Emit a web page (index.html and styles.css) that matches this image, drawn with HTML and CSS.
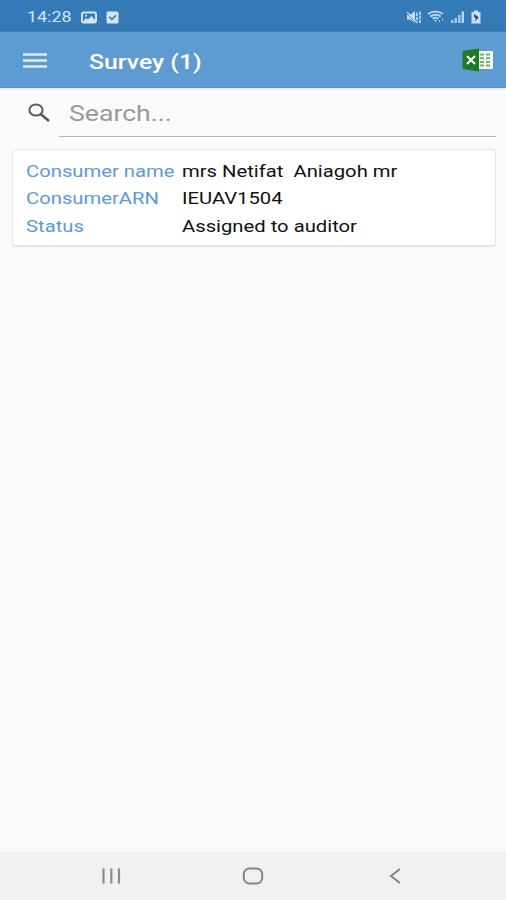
FILE: index.html
```html
<!DOCTYPE html>
<html lang="en">
<head>
<meta charset="UTF-8" />
<meta name="viewport" content="width=device-width, initial-scale=1" />
<title>Survey</title>
<link rel="stylesheet" href="styles.css">
</head>
<body>
  <div class="status-bar">
    <span class="time"><span class="wide">14:28</span></span>
    <svg class="picture-icon" width="16" height="13" viewBox="0 0 16 13">
      <rect x="1" y="1.500" width="14" height="10" rx="1.500" fill="none" stroke="#d3e5f5" stroke-width="1.900" />
      <path d="M2 10.500L5 7l2 1.500L10.500 5 14 9v2H2z" fill="#d3e5f5" />
      <circle cx="5" cy="4.700" r="1" fill="#d3e5f5" />
    </svg>
    <svg class="check-icon" width="13" height="13" viewBox="0 0 13 13">
      <rect x="0.500" y="0.500" width="12" height="12" rx="1.500" fill="#d3e5f5" />
      <path d="M3.300 5.800l2.500 2.500 4.200-4" fill="none" stroke="#347ab7" stroke-width="1.600" />
    </svg>
    <div class="signals">
      <svg width="16" height="14" viewBox="0 0 16 14">
        <path d="M1 4.500h3.500L9 1v12L4.500 9.500H1z" fill="#c3dbef" />
        <path d="M1 3.500l9 9.500" stroke="#347ab7" stroke-width="1" />
        <path d="M1 2l10.500 11" stroke="#c3dbef" stroke-width="1.200" />
        <path d="M11 2.500v8.500M14 1.500v11.500" stroke="#c3dbef" stroke-width="1.600" stroke-dasharray="3.500 0.800" />
      </svg>
      <svg width="18" height="14" viewBox="0 0 18 14">
        <path d="M1 4q7.500-5 15 0M3.300 6.500q5.200-3.500 10.400 0M5.600 8.800q2.900-2 5.800 0" fill="none" stroke="#b5d2eb" stroke-width="1.900" />
        <path d="M7 10h3l-1.500 2zM12 10h1v2h-1zM15 8.500h1v2h-1z" fill="#b5d2eb" />
      </svg>
      <svg width="15" height="14" viewBox="0 0 15 14">
        <path d="M1 10h2.500v3H1zM4.500 8H7v5H4.500zM8 5h2.500v8H8z" fill="#a3c6e4" />
        <path d="M11.500 1.500H14v11.500h-2.500z" fill="#b9d5ec" />
      </svg>
      <svg width="12" height="14" viewBox="0 0 12 14">
        <path d="M4 0.500h4V2h2.500v11.500h-9V2H4z" fill="#c9dff1" />
        <path d="M4.200 4l4.500 3.200-3.500 4 .3-3.500-1.500-.5z" fill="#244d73" />
      </svg>
    </div>
  </div>

  <header class="app-bar">
    <svg class="menu-icon" width="24" height="17" viewBox="0 0 24 17">
      <path d="M0 2.500h24M0 8.500h24M0 14.500h24" stroke="#d9e9f6" stroke-width="2.400" />
    </svg>
    <h1><span class="wide">Survey (1)</span></h1>
    <svg class="excel-icon" width="32" height="24" viewBox="0 0 32 24">
      <rect x="14" y="3" width="17" height="18" rx="1" fill="#f3f8f3" />
      <path d="M18 6.500h4M24 6.500h4M18 10.200h4M24 10.200h4M18 13.900h4M24 13.900h4M18 17.600h4M24 17.600h4" stroke="#79ad7b" stroke-width="2" />
      <path d="M0.500 3L17 0.500v23L0.500 21z" fill="#1d7a25" />
      <path d="M5 8l8 8M13 8l-8 8" stroke="#fff" stroke-width="2" />
    </svg>
  </header>

  <main>
    <div class="search">
      <svg class="search-icon" width="24" height="20" viewBox="0 0 24 20">
        <ellipse cx="9" cy="7" rx="6.600" ry="5.600" fill="none" stroke="#5c5c5c" stroke-width="2" />
        <path d="M13.500 11l8.500 7" stroke="#5c5c5c" stroke-width="2.600" />
      </svg>
      <div class="search-field"><span class="wide">Search...</span></div>
    </div>

    <div class="card">
      <div class="row">
        <div class="label"><span class="wide">Consumer name</span></div>
        <div class="value"><span class="wide">mrs Netifat&nbsp; Aniagoh mr</span></div>
      </div>
      <div class="row">
        <div class="label"><span class="wide">ConsumerARN</span></div>
        <div class="value"><span class="wide">IEUAV1504</span></div>
      </div>
      <div class="row">
        <div class="label"><span class="wide">Status</span></div>
        <div class="value"><span class="wide">Assigned to auditor</span></div>
      </div>
    </div>
  </main>

  <nav class="nav-bar">
    <svg width="24" height="20" viewBox="0 0 24 20">
      <path d="M4.500 2.500v15M12.300 2.500v15M20 2.500v15" stroke="#8b8b8b" stroke-width="2.200" />
    </svg>
    <svg width="24" height="20" viewBox="0 0 24 20">
      <rect x="2.800" y="2.500" width="18.400" height="15" rx="5.500" fill="none" stroke="#858585" stroke-width="2" />
    </svg>
    <svg width="24" height="20" viewBox="0 0 24 20">
      <path d="M17 3L8 10l9 7" fill="none" stroke="#858585" stroke-width="2" />
    </svg>
  </nav>
</body>
</html>
```

FILE: styles.css
```css
body {
  margin: 0;
  height: 100vh;
  display: flex;
  flex-direction: column;
  background: #fafafa;
  font-family: Roboto, sans-serif;
  overflow: hidden;
}
svg {
  display: block;
  flex: none;
}
/* letters are drawn wider than they are tall */
.wide {
  display: inline-block;
  transform: scaleX(1.19);
  transform-origin: left center;
  white-space: nowrap;
}
.status-bar {
  height: 32px;
  box-sizing: border-box;
  padding: 2px 24px 0 27px;
  display: flex;
  align-items: center;
  background: #347ab7;
  color: #d3e5f5;
}
.time {
  width: 54px;
  font-size: 15px;
}
.check-icon {
  margin-left: 9px;
}
.signals {
  margin-left: auto;
  display: flex;
  gap: 5px;
}
.app-bar {
  height: 56px;
  box-sizing: border-box;
  padding: 1px 12px 0 23px;
  display: flex;
  align-items: center;
  background: #5d9bd0;
  border-bottom: 1px solid #4c8fc8;
  box-shadow: 0 1px 2px #ddd;
}
.app-bar h1 {
  margin: 3px 0 0 42px;
  color: #fff;
  font-size: 21px;
  font-weight: 500;
}
.app-bar h1 .wide {
  transform: scaleX(1.18);
}
.excel-icon {
  margin-left: auto;
}
main {
  flex: 1;
  padding: 0 10px 0 12px;
}
.search {
  height: 49px;
  box-sizing: border-box;
  padding-left: 15px;
  display: flex;
}
.search-icon {
  margin-top: 15px;
}
.search-field {
  flex: 1;
  margin-left: 8px;
  padding-left: 10px;
  border-bottom: 1px solid #b5b5b5;
  color: #999;
  font-size: 22px;
  line-height: 52px;
}
.search-field .wide {
  height: 48px;
  transform: scaleX(1.21);
}
.card {
  margin-top: 12px;
  height: 97px;
  box-sizing: border-box;
  padding: 7px 13px;
  background: #fff;
  border: 1px solid #e6e6e6;
  border-radius: 3px;
  box-shadow: 0 1px 1px #e2e2e2;
}
.row {
  display: flex;
  height: 27.4px;
  font-size: 17px;
  line-height: 28px;
}
.label {
  width: 156px;
  color: #5b9bd5;
}
.value {
  color: #111;
}
.nav-bar {
  height: 48px;
  padding: 0 40px;
  display: flex;
  justify-content: space-around;
  align-items: center;
  background: #f1f1f1;
}
```
